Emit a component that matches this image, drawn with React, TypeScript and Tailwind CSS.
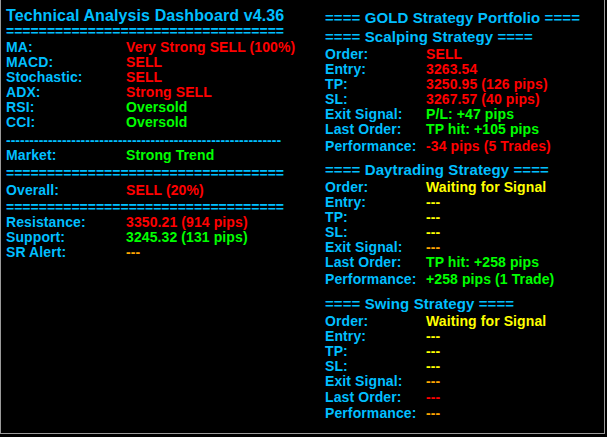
const BLUE = 'text-[#00bfff]'

type Row = { label: string; value: string; color: string; extra?: string }

function Line({ label, value, color, labelW, extra }: Row & { labelW: string }) {
  return (
    <div className={`flex h-[15px] leading-[15px] whitespace-nowrap ${extra ?? ''}`}>
      <span className={`${labelW} shrink-0 ${BLUE}`}>{label}</span>
      <span className={color}>{value}</span>
    </div>
  )
}

const RED = 'text-[#ff0000]'
const GREEN = 'text-[#00ff00]'
const YELLOW = 'text-[#ffff00]'
const ORANGE = 'text-[#ffa500]'

function Strategy({ title, rows, className }: { title: string; rows: Row[]; className?: string }) {
  return (
    <div className={className}>
      <div className={`h-[16px] leading-[16px] text-[15px] whitespace-nowrap ${BLUE}`}>==== {title} ====</div>
      <div className="mt-[2px]">
        {rows.map((r) => (
          <Line key={r.label} {...r} labelW="w-[101px]" />
        ))}
      </div>
    </div>
  )
}

export default function App() {
  const eq = '='.repeat(34)
  const dash = '-'.repeat(59)

  return (
    <div className="min-h-screen bg-black">
      <div className="w-[605px] h-[434px] flex bg-black border-l border-r border-b border-[#9a9a9a] font-['Liberation_Sans',Arial,sans-serif] font-bold text-[14px] tracking-[0.1px]">
        {/* Left: indicators */}
        <div className="w-[324px] shrink-0 pl-[5px] pt-[7px]">
          <div className={`h-[17px] leading-[18px] text-[16px] whitespace-nowrap ${BLUE}`}>
            Technical Analysis Dashboard v4.36
          </div>
          <div className={`h-[15px] leading-[15px] tracking-normal ${BLUE}`}>{eq}</div>
          <div className="mt-[1px]">
            <Line label="MA:" value="Very Strong SELL (100%)" color={RED} labelW="w-[120px]" />
            <Line label="MACD:" value="SELL" color={RED} labelW="w-[120px]" />
            <Line label="Stochastic:" value="SELL" color={RED} labelW="w-[120px]" />
            <Line label="ADX:" value="Strong SELL" color={RED} labelW="w-[120px]" />
            <Line label="RSI:" value="Oversold" color={GREEN} labelW="w-[120px]" />
            <Line label="CCI:" value="Oversold" color={GREEN} labelW="w-[120px]" />
          </div>
          <div className={`mt-[3px] h-[15px] leading-[15px] whitespace-nowrap tracking-normal ${BLUE}`}>{dash}</div>
          <Line label="Market:" value="Strong Trend" color={GREEN} labelW="w-[120px]" />
          <div className={`mt-[3px] h-[15px] leading-[15px] tracking-normal ${BLUE}`}>{eq}</div>
          <Line label="Overall:" value="SELL (20%)" color={RED} labelW="w-[120px]" extra="mt-[2px]" />
          <div className={`mt-[2px] h-[15px] leading-[15px] tracking-normal ${BLUE}`}>{eq}</div>
          <Line label="Resistance:" value="3350.21 (914 pips)" color={RED} labelW="w-[120px]" />
          <Line label="Support:" value="3245.32 (131 pips)" color={GREEN} labelW="w-[120px]" />
          <Line label="SR Alert:" value="---" color={ORANGE} labelW="w-[120px]" />
        </div>

        {/* Right: strategy portfolio */}
        <div className="flex-1 pt-[10px]">
          <div className={`h-[16px] leading-[16px] text-[15px] whitespace-nowrap ${BLUE}`}>
            ==== GOLD Strategy Portfolio ====
          </div>
          <Strategy
            className="mt-[3px]"
            title="Scalping Strategy"
            rows={[
              { label: 'Order:', value: 'SELL', color: RED },
              { label: 'Entry:', value: '3263.54', color: RED },
              { label: 'TP:', value: '3250.95 (126 pips)', color: RED },
              { label: 'SL:', value: '3267.57 (40 pips)', color: RED },
              { label: 'Exit Signal:', value: 'P/L: +47 pips', color: GREEN },
              { label: 'Last Order:', value: 'TP hit: +105 pips', color: GREEN },
              { label: 'Performance:', value: '-34 pips (5 Trades)', color: RED, extra: 'mt-[2px]' },
            ]}
          />
          <Strategy
            className="mt-[8px]"
            title="Daytrading Strategy"
            rows={[
              { label: 'Order:', value: 'Waiting for Signal', color: YELLOW },
              { label: 'Entry:', value: '---', color: YELLOW },
              { label: 'TP:', value: '---', color: YELLOW },
              { label: 'SL:', value: '---', color: YELLOW },
              { label: 'Exit Signal:', value: '---', color: ORANGE },
              { label: 'Last Order:', value: 'TP hit: +258 pips', color: GREEN },
              { label: 'Performance:', value: '+258 pips (1 Trade)', color: GREEN, extra: 'mt-[2px]' },
            ]}
          />
          <Strategy
            className="mt-[9px]"
            title="Swing Strategy"
            rows={[
              { label: 'Order:', value: 'Waiting for Signal', color: YELLOW },
              { label: 'Entry:', value: '---', color: YELLOW },
              { label: 'TP:', value: '---', color: YELLOW },
              { label: 'SL:', value: '---', color: YELLOW },
              { label: 'Exit Signal:', value: '---', color: ORANGE },
              { label: 'Last Order:', value: '---', color: RED, extra: 'mt-[1px]' },
              { label: 'Performance:', value: '---', color: ORANGE, extra: 'mt-[1px]' },
            ]}
          />
        </div>
      </div>
    </div>
  )
}
